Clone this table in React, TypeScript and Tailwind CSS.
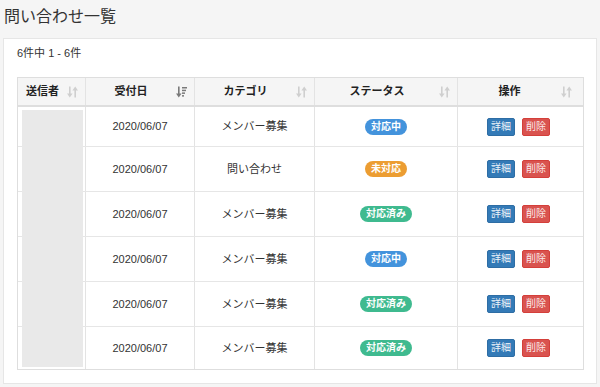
import React from "react";

const font = { fontFamily: '"Liberation Sans", "Noto Sans CJK JP", sans-serif' };

function SortBoth() {
  return (
    <svg width="11" height="12" viewBox="0 0 11 12" className="shrink-0">
      <g fill="#cfcfcf">
        <rect x="2" y="0.5" width="1.6" height="8" />
        <polygon points="0,7.5 5.6,7.5 2.8,11.5" />
        <rect x="7.4" y="3.5" width="1.6" height="8" />
        <polygon points="5.4,4.5 11,4.5 8.2,0.5" />
      </g>
    </svg>
  );
}

function SortDesc() {
  return (
    <svg width="11" height="12" viewBox="0 0 11 12" className="shrink-0">
      <g fill="#7a7a7a">
        <rect x="2" y="0.5" width="1.6" height="8" />
        <polygon points="0,7.5 5.6,7.5 2.8,11.5" />
        <rect x="6" y="1" width="5" height="1.5" />
        <rect x="6" y="3.7" width="4" height="1.5" />
        <rect x="6" y="6.4" width="3" height="1.5" />
        <rect x="6" y="9.1" width="2" height="1.5" />
      </g>
    </svg>
  );
}

const cols = [
  { label: "送信者", w: "w-[68px]", desc: false },
  { label: "受付日", w: "w-[109px]", desc: true },
  { label: "カテゴリ", w: "w-[120px]", desc: false },
  { label: "ステータス", w: "w-[143px]", desc: false },
  { label: "操作", w: "w-[121px]", desc: false },
];

type Status = "対応中" | "未対応" | "対応済み";

const rows: { cat: string; status: Status; h: string }[] = [
  { cat: "メンバー募集", status: "対応中", h: "h-[39px]" },
  { cat: "問い合わせ", status: "未対応", h: "h-[45px]" },
  { cat: "メンバー募集", status: "対応済み", h: "h-[45px]" },
  { cat: "メンバー募集", status: "対応中", h: "h-[45px]" },
  { cat: "メンバー募集", status: "対応済み", h: "h-[45px]" },
  { cat: "メンバー募集", status: "対応済み", h: "h-[43px]" },
];

function Badge({ s }: { s: Status }) {
  const cls =
    s === "対応中"
      ? "bg-[#4393dc]"
      : s === "未対応"
      ? "bg-[#ec9d32]"
      : "bg-[#3fba8f]";
  return (
    <span
      className={`${cls} inline-flex h-[16px] items-center whitespace-nowrap rounded-full px-[6px] text-[10px] font-bold leading-none text-white`}
    >
      {s}
    </span>
  );
}

export default function App() {
  return (
    <div
      className="h-[387px] w-[600px] overflow-hidden bg-[#f5f5f5] px-[3px] text-[#333]"
      style={font}
    >
      <div className="flex h-[38px] items-start pl-[1px] pt-[5px] text-[16px] leading-[24px] text-[#333]">
        問い合わせ一覧
      </div>
      <div className="border border-[#e6e6e6] bg-white pb-[13px] pl-[13px] pr-[12px] pt-[5px]">
        <div className="h-[18px] text-[11px] leading-[18px]">6件中 1 - 6件</div>
        <div className="relative mt-[15px] w-[567px] border border-[#dedede]">
          <div className="flex h-[29px] border-b-2 border-[#dedede] bg-[#f5f5f5]">
            {cols.map((c, i) => (
              <div
                key={c.label}
                className={`${c.w} flex shrink-0 items-center pl-[8px] pr-[7px] ${
                  i < cols.length - 1 ? "border-r border-[#e3e3e3]" : ""
                }`}
              >
                <span className="flex-1 whitespace-nowrap pr-[8px] text-center text-[11px] font-bold text-[#222]">
                  {c.label}
                </span>
                {c.desc ? <SortDesc /> : <SortBoth />}
              </div>
            ))}
          </div>
          {rows.map((r, ri) => (
            <div
              key={ri}
              className={`flex ${r.h} ${ri > 0 ? "border-t border-[#e6e6e6]" : ""}`}
            >
              <div className="w-[68px] shrink-0 border-r border-[#e3e3e3]" />
              <div className="flex w-[109px] shrink-0 items-center justify-center border-r border-[#e3e3e3] text-[11px]">
                2020/06/07
              </div>
              <div className="flex w-[120px] shrink-0 items-center justify-center border-r border-[#e3e3e3] text-[11px]">
                {r.cat}
              </div>
              <div className="flex w-[143px] shrink-0 items-center justify-center border-r border-[#e3e3e3]">
                <Badge s={r.status} />
              </div>
              <div className="flex w-[121px] shrink-0 items-center justify-center gap-[7px]">
                <span className="inline-flex h-[18px] items-center rounded-[2px] border border-[#2e6da4] bg-[#337ab7] px-[3px] text-[10px] leading-none text-[#eef3f9]">
                  詳細
                </span>
                <span className="inline-flex h-[18px] items-center rounded-[2px] border border-[#d43f3a] bg-[#d9534f] px-[3px] text-[10px] leading-none text-[#fbeaea]">
                  削除
                </span>
              </div>
            </div>
          ))}
          <div className="absolute left-[4px] top-[32px] h-[257px] w-[61px] bg-[#e9e9e9]" />
        </div>
      </div>
    </div>
  );
}
